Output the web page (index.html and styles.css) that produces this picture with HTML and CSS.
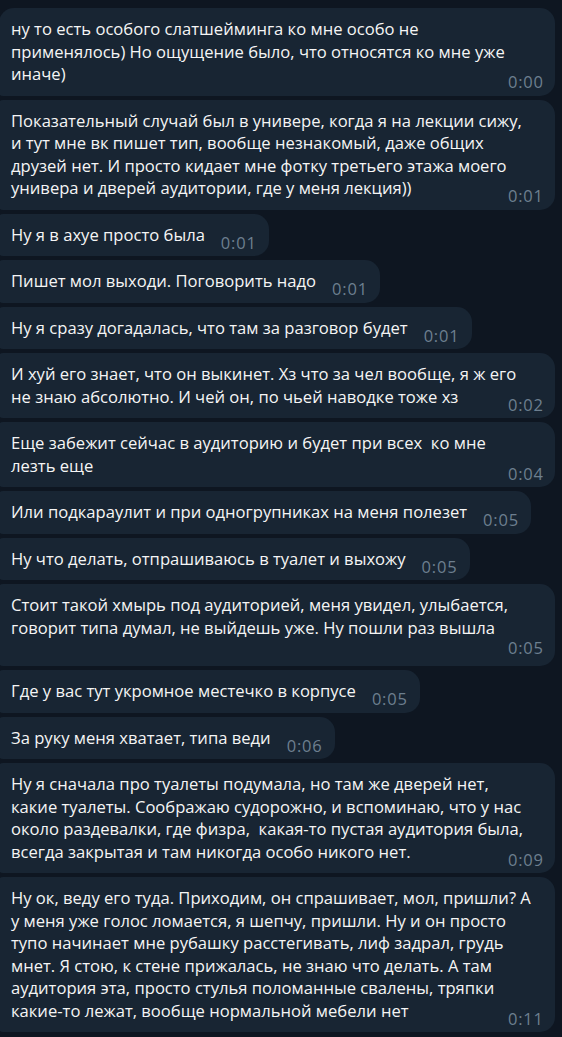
FILE: index.html
```html
<!DOCTYPE html>
<html lang="ru">
<head>
<meta charset="utf-8">
<link rel="stylesheet" href="styles.css">
</head>
<body>
<div class="chat">
  <div class="msg wide first">ну то есть особого слатшейминга ко мне особо не<br>применялось) Но ощущение было, что относятся ко мне уже<br>иначе)<span class="time">0:00</span></div>
  <div class="msg wide">Показательный случай был в универе, когда я на лекции сижу,<br>и тут мне вк пишет тип, вообще незнакомый, даже общих<br>друзей нет. И просто кидает мне фотку третьего этажа моего<br>универа и дверей аудитории, где у меня лекция))<span class="time">0:01</span></div>
  <div class="msg">Ну я в ахуе просто была<span class="time">0:01</span></div>
  <div class="msg">Пишет мол выходи. Поговорить надо<span class="time">0:01</span></div>
  <div class="msg">Ну я сразу догадалась, что там за разговор будет<span class="time">0:01</span></div>
  <div class="msg wide">И хуй его знает, что он выкинет. Хз что за чел вообще, я ж его<br>не знаю абсолютно. И чей он, по чьей наводке тоже хз<span class="time">0:02</span></div>
  <div class="msg wide">Еще забежит сейчас в аудиторию и будет при всех &nbsp;ко мне<br>лезть еще<span class="time">0:04</span></div>
  <div class="msg">Или подкараулит и при одногрупниках на меня полезет<span class="time">0:05</span></div>
  <div class="msg">Ну что делать, отпрашиваюсь в туалет и выхожу<span class="time">0:05</span></div>
  <div class="msg wide">Стоит такой хмырь под аудиторией, меня увидел, улыбается,<br>говорит типа думал, не выйдешь уже. Ну пошли раз вышла<span class="time own">0:05</span></div>
  <div class="msg">Где у вас тут укромное местечко в корпусе<span class="time">0:05</span></div>
  <div class="msg">За руку меня хватает, типа веди<span class="time">0:06</span></div>
  <div class="msg wide">Ну я сначала про туалеты подумала, но там же дверей нет,<br>какие туалеты. Соображаю судорожно, и вспоминаю, что у нас<br>около раздевалки, где физра, &nbsp;какая-то пустая аудитория была,<br>всегда закрытая и там никогда особо никого нет.<span class="time">0:09</span></div>
  <div class="msg wide">Ну ок, веду его туда. Приходим, он спрашивает, мол, пришли? А<br>у меня уже голос ломается, я шепчу, пришли. Ну и он просто<br>тупо начинает мне рубашку расстегивать, лиф задрал, грудь<br>мнет. Я стою, к стене прижалась, не знаю что делать. А там<br>аудитория эта, просто стулья поломанные свалены, тряпки<br>какие-то лежат, вообще нормальной мебели нет<span class="time">0:11</span></div>
</div>
</body>
</html>
```

FILE: styles.css
```css
html, body {
  margin: 0;
  background: #0e1621;
}

body {
  font-family: "Open Sans", "Noto Sans", sans-serif;
  overflow: hidden;
}

.chat {
  display: flex;
  flex-direction: column;
  align-items: flex-start;
  gap: 4px;
  padding-top: 8px;
  margin-left: -1px;
}

.msg {
  box-sizing: border-box;
  max-width: 556px;
  padding: 10px 13px 10px 12px;
  background: #182533;
  color: #f5f5f5;
  font-size: 16.6px;
  line-height: 22.5px;
  border-radius: 4px 15px 15px 4px;
  white-space: nowrap;
}

.msg.wide {
  width: 556px;
  padding-right: 12px;
}

.msg.first {
  border-top-left-radius: 15px;
}

.time {
  float: right;
  margin: 11px -0.8px -4.5px 16px;
  font-size: 16.5px;
  line-height: 16px;
  letter-spacing: 0.8px;
  color: #6d7f8f;
}

.time.own {
  float: none;
  display: block;
  text-align: right;
  margin: 1px -0.8px 0 0;
}
```
